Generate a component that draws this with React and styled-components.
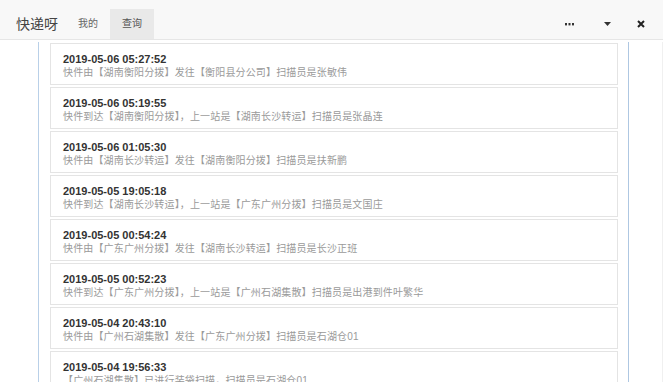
import React from 'react';
import styled, { createGlobalStyle } from 'styled-components';

const Global = createGlobalStyle`
    html, body {
        margin: 0;
        padding: 0;
        background: #fff;
        font-family: "Liberation Sans", "Noto Sans CJK SC", sans-serif;
        overflow: hidden;
    }
`

const Page = styled.div`
    width: 663px;
    height: 382px;
    display: flex;
    flex-direction: column;
    overflow: hidden;
`

const Header = styled.div`
    height: 39px;
    flex-shrink: 0;
    display: flex;
    align-items: flex-end;
    background: #f8f8f8;
    border-bottom: 1px solid #e6e6e6;
    padding-left: 16px;
`

const Title = styled.div`
    height: 30px;
    line-height: 30px;
    font-size: 14px;
    color: #444;
    margin-right: 8px;
`

const Tab = styled.div`
    height: 30px;
    line-height: 30px;
    padding: 0 12px;
    font-size: 10px;
    color: ${p => p.active ? '#555' : '#666'};
    background: ${p => p.active ? '#e9e9e9' : 'transparent'};
`

const Tools = styled.div`
    margin-left: auto;
    height: 30px;
    display: flex;
    align-items: center;
`

const Tool = styled.div`
    width: ${p => p.w || 34}px;
    display: flex;
    justify-content: center;
    align-items: center;
`

const Body = styled.div`
    flex: 1;
    display: flex;
    padding-left: 38px;
    padding-top: 2px;
    min-height: 0;
`

const Panel = styled.div`
    width: 574px;
    border-left: 1px solid #b9d0e8;
    border-right: 1px solid #aec7e2;
    padding: 1px 10px 0 11px;
    display: flex;
    flex-direction: column;
    gap: 2px;
`

const Track = styled.div`
    width: 33px;
    border-right: 1px solid #f0f0f0;
`

const Card = styled.div`
    flex-shrink: 0;
    border: 1px solid #e4e4e4;
    background: #fff;
    padding: 8px 12px 4px;
`

const Time = styled.div`
    font-size: 11px;
    line-height: 14px;
    font-weight: bold;
    color: #333;
`

const Desc = styled.div`
    font-size: 10px;
    line-height: 14px;
    letter-spacing: 0.15px;
    color: #9a9a9a;
    white-space: nowrap;
`

const rows = [
    ['2019-05-06 05:27:52', '快件由【湖南衡阳分拨】发往【衡阳县分公司】扫描员是张敏伟'],
    ['2019-05-06 05:19:55', '快件到达【湖南衡阳分拨】，上一站是【湖南长沙转运】扫描员是张晶连'],
    ['2019-05-06 01:05:30', '快件由【湖南长沙转运】发往【湖南衡阳分拨】扫描员是扶新鹏'],
    ['2019-05-05 19:05:18', '快件到达【湖南长沙转运】，上一站是【广东广州分拨】扫描员是文国庄'],
    ['2019-05-05 00:54:24', '快件由【广东广州分拨】发往【湖南长沙转运】扫描员是长沙正班'],
    ['2019-05-05 00:52:23', '快件到达【广东广州分拨】，上一站是【广州石湖集散】扫描员是出港到件叶繁华'],
    ['2019-05-04 20:43:10', '快件由【广州石湖集散】发往【广东广州分拨】扫描员是石湖仓01'],
    ['2019-05-04 19:56:33', '【广州石湖集散】已进行装袋扫描，扫描员是石湖仓01'],
];

const App = () => {
    return (
        <Page>
            <Global />
            <Header>
                <Title>快递呀</Title>
                <Tab>我的</Tab>
                <Tab active>查询</Tab>
                <Tools>
                    <Tool w={40}>
                        <svg width="9" height="3" viewBox="0 0 9 3">
                            <rect x="0" y="0" width="2" height="2.4" fill="#333" />
                            <rect x="3.5" y="0" width="2" height="2.4" fill="#333" />
                            <rect x="7" y="0" width="2" height="2.4" fill="#333" />
                        </svg>
                    </Tool>
                    <Tool w={36}>
                        <svg width="7" height="4" viewBox="0 0 7 4">
                            <path d="M0 0 L7 0 L3.5 4 Z" fill="#333" />
                        </svg>
                    </Tool>
                    <Tool w={32}>
                        <svg width="8" height="8" viewBox="0 0 8 8">
                            <path d="M1 1 L7 7 M7 1 L1 7" stroke="#222" strokeWidth="2" />
                        </svg>
                    </Tool>
                    <div style={{ width: 6 }} />
                </Tools>
            </Header>
            <Body>
                <Panel>
                    {rows.map(([t, d]) => (
                        <Card key={t}>
                            <Time>{t}</Time>
                            <Desc>{d}</Desc>
                        </Card>
                    ))}
                </Panel>
                <Track />
            </Body>
        </Page>
    );
};

export default App;
